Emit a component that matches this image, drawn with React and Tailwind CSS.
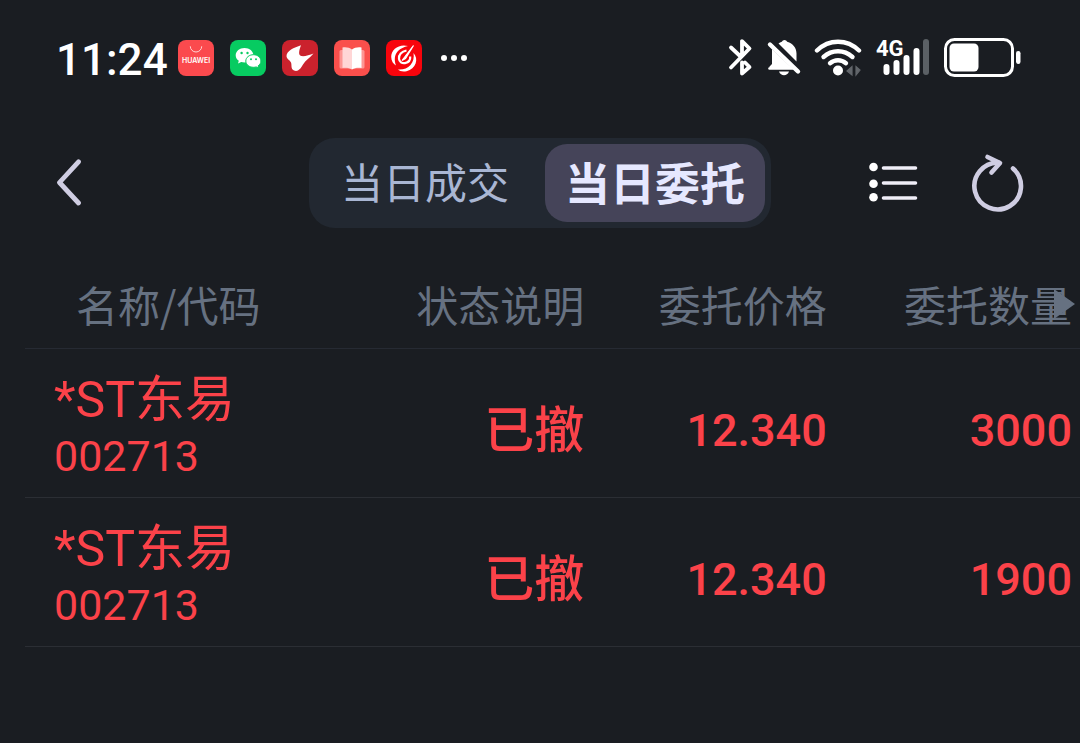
import React, { useState } from 'react';

const orders = [
  { id: 1, name: '*ST东易', code: '002713', status: '已撤', price: '12.340', amount: '3000' },
  { id: 2, name: '*ST东易', code: '002713', status: '已撤', price: '12.340', amount: '1900' },
];

const tabs = [
  { key: 'deals', label: '当日成交' },
  { key: 'orders', label: '当日委托' },
];

function HuaweiIcon() {
  return (
    <svg className="h-9 w-9" viewBox="0 0 36 36">
      <rect width="36" height="36" rx="8" fill="#fb4a4e" />
      <path d="M12.3 6.3a5.7 5.7 0 0 0 11.4 0" fill="none" stroke="#ffd5d5" strokeWidth="1" />
      <text
        x="18"
        y="23"
        textAnchor="middle"
        fill="#fff"
        fontSize="7"
        fontWeight="600"
        fontFamily="Inter, sans-serif"
      >
        HUAWEI
      </text>
    </svg>
  );
}

function WechatIcon() {
  return (
    <svg className="h-9 w-9" viewBox="0 0 36 36">
      <rect width="36" height="36" rx="8" fill="#07cb61" />
      <path d="M14.5 8C9.5 8 5.7 11.2 5.7 15.2c0 2.3 1.2 4.2 3.1 5.5L8 23.5l3.2-1.6c1.1.3 2.2.5 3.3.5 5 0 8.9-3.2 8.9-7.2S19.5 8 14.5 8z" fill="#fff" />
      <path d="M23.5 14.7c-4.3 0-7.7 2.8-7.7 6.3s3.4 6.3 7.7 6.3c1 0 1.9-.1 2.7-.4l2.6 1.4-.7-2.4c1.8-1.2 2.8-2.9 2.8-4.9 0-3.5-3.3-6.3-7.4-6.3z" fill="#fff" stroke="#07cb61" strokeWidth="1" />
      <circle cx="11.6" cy="13" r="1.2" fill="#07cb61" />
      <circle cx="17.5" cy="13" r="1.2" fill="#07cb61" />
      <circle cx="21" cy="19.2" r="1" fill="#07cb61" />
      <circle cx="26" cy="19.2" r="1" fill="#07cb61" />
    </svg>
  );
}

function BullIcon() {
  return (
    <svg className="h-9 w-9" viewBox="0 0 36 36">
      <rect width="36" height="36" rx="8" fill="#cb222d" />
      <path d="M19 5.3C12 7.5 4.5 11 4.5 16c0 3 3.5 4 4.5 6.5 1 2.5-.5 6.5 3 8 4 1.5 6.5-1.500 9-6 2.500-4.500 7-6.500 10.500-11-4 1.500-9 3.300-12.200 2.600-3.300-.7-2.300-5.600-.3-10.800z" fill="#fff" />
    </svg>
  );
}

function BookIcon() {
  return (
    <svg className="h-9 w-9" viewBox="0 0 36 36">
      <rect width="36" height="36" rx="8" fill="#fa4f4c" />
      <rect x="5.5" y="10" width="25" height="18.5" rx="1.5" fill="#fd9694" />
      <path d="M8.5 7.5c3.5-.5 7 0 9.5 2v20c-2.5-1.6-6-2-9.5-1.5z" fill="#ffd6d6" />
      <path d="M27.5 7.5c-3.5-.5-7 0-9.5 2v20c2.5-1.6 6-2 9.5-1.5z" fill="#fff" />
    </svg>
  );
}

function SwirlIcon() {
  return (
    <svg className="h-9 w-9" viewBox="0 0 36 36">
      <rect width="36" height="36" rx="8" fill="#f8040c" />
      <path d="M22 6C13.500 3.500 5 9 5.200 17c.1 4 2 7 4.800 8.500C8 20 8.500 14.500 12 11c2.500-2.500 6-4 10-5z" fill="#fff" />
      <path d="M27.500 13C33 19 30 29 20.500 31.200c-4 .9-7-.2-8.500-1.700 5.500.3 9.500-1.200 12.500-4.500 3-3.300 3.700-7.500 3-12z" fill="#fff" />
      <path d="M20.500 10.500c-5 .8-8 4.500-7.500 8.300.4 3 3 4.900 6 4.300 3.500-.7 5.500-3.300 5.200-6.600" fill="none" stroke="#fff" strokeWidth="2.200" />
      <path d="M27.500 5.500 16 20.500l3.500-2z" fill="#fff" stroke="#fff" strokeWidth="1.200" />
    </svg>
  );
}

function BluetoothIcon() {
  return (
    <svg className="h-10 w-7" viewBox="0 0 28 40" fill="none" stroke="#fff" strokeWidth="3.8" strokeLinecap="round" strokeLinejoin="round">
      <path d="M5 9.5 13.5 17.5M5 29.5 23.5 10.5 16 3.2v14M16 24.5v11l7.5-6.5-4.5-4.5" />
    </svg>
  );
}

function BellOffIcon() {
  return (
    <svg className="h-10 w-9" viewBox="0 0 36 40">
      <path d="M6 11 27 31H3.5v-2.600l2.500-2.400z" fill="#fff" />
      <path d="M12.5 5.5c1-.9 2-1.400 3.300-1.700a3 3 0 0 1 5.400 0C27 5.500 30.500 10 30.500 15.500v8z" fill="#fff" />
      <path d="M4 6.5 32 33.5" stroke="#fff" strokeWidth="4.4" strokeLinecap="round" />
      <path d="M3.5 30.5h23" stroke="#fff" strokeWidth="2.6" strokeLinecap="round" />
      <path d="M13 33.5h10c-1 2.600-2.800 3.800-5 3.800s-4-1.200-5-3.800z" fill="#fff" />
    </svg>
  );
}

function WifiIcon() {
  return (
    <svg className="h-10 w-12" viewBox="0 0 48 40" fill="none" stroke="#fff" strokeWidth="4.4" strokeLinecap="round">
      <path d="M3 12.5C15 .8 33 .8 45 12.5" />
      <path d="M9.5 19c8.5-7.600 20.500-7.600 29 0" />
      <path d="M16 25.2c4.800-4 11.200-4 16 0" />
      <circle cx="24" cy="32.5" r="5" fill="#fff" stroke="none" />
      <path d="M38 28.5v8.500L33 33zM42 37v-8.500L46 32z" fill="#62666b" stroke="#62666b" strokeWidth="1.2" />
    </svg>
  );
}

function SignalIcon() {
  return (
    <svg className="h-12 w-14" viewBox="0 -4 56 48">
      <text x="0" y="18" fill="#fff" fontSize="22" fontWeight="700" fontFamily="Roboto, sans-serif">
        4G
      </text>
      <g stroke="#fff" strokeWidth="6" strokeLinecap="round">
        <path d="M10.5 29v5M20.5 25v9M30.5 20v14M40.5 13v21" />
        <path d="M50 4v30" stroke="#5b6065" />
      </g>
    </svg>
  );
}

function BatteryIcon() {
  return (
    <svg className="h-10 w-20" viewBox="0 0 80 40">
      <rect x="1.5" y="1.5" width="67" height="36" rx="9" fill="none" stroke="#fff" strokeWidth="3" />
      <rect x="5.5" y="5.5" width="29" height="28" rx="4.5" fill="#fff" />
      <rect x="72" y="13" width="4.5" height="13" rx="2.2" fill="#fff" />
    </svg>
  );
}

function StatusBar() {
  return (
    <div className="flex h-[116px] items-center justify-between px-14">
      <div className="flex items-center">
        <span className="w-[122px] pt-1 font-['Roboto',sans-serif] text-[44px] leading-none font-medium text-white">
          11:24
        </span>
        <div className="flex items-center gap-4">
          <HuaweiIcon />
          <WechatIcon />
          <BullIcon />
          <BookIcon />
          <SwirlIcon />
          <svg className="h-2 w-8" viewBox="0 0 32 8" fill="#fff">
            <circle cx="6" cy="4" r="3" />
            <circle cx="16" cy="4" r="3" />
            <circle cx="26" cy="4" r="3" />
          </svg>
        </div>
      </div>
      <div className="flex items-center gap-3">
        <BluetoothIcon />
        <BellOffIcon />
        <WifiIcon />
        <div className="flex items-center gap-3 pl-0.5">
          <SignalIcon />
          <BatteryIcon />
        </div>
      </div>
    </div>
  );
}

function TopBar({ active, onChange }) {
  return (
    <header className="flex items-center px-14 pt-[22px]">
      <div className="flex-1">
        <button type="button" aria-label="返回" className="block">
          <svg className="h-12 w-7" viewBox="0 0 28 48" fill="none" stroke="#cfcde2" strokeWidth="4.8" strokeLinecap="round" strokeLinejoin="round">
            <path d="M22.5 2.8 3.5 23.5l19 20.5" />
          </svg>
        </button>
      </div>

      <nav className="flex rounded-[26px] bg-[#222831] p-1.5">
        {tabs.map((tab) => (
          <button
            key={tab.key}
            type="button"
            onClick={() => onChange(tab.key)}
            className={
              tab.key === active
                ? 'h-[78px] rounded-[22px] bg-[#454459] px-5 pb-1 text-[45px] leading-none font-bold text-[#e6e8ff]'
                : 'h-[78px] rounded-[22px] pr-9 pb-1 pl-[26px] text-[42px] leading-none text-[#a9b6d3]'
            }
          >
            {tab.label}
          </button>
        ))}
      </nav>

      <div className="flex flex-1 items-center justify-end gap-[50px]">
        <button type="button" aria-label="列表">
          <svg className="h-12 w-[52px]" viewBox="0 0 52 48">
            <g fill="#fff">
              <circle cx="5.5" cy="8" r="4.3" />
              <circle cx="5.5" cy="24.7" r="4.3" />
              <circle cx="5.5" cy="38.3" r="4.3" />
            </g>
            <path d="M15.5 9h32M15.5 24h32M15.5 39h32" stroke="#f0eef8" strokeWidth="3.6" strokeLinecap="round" />
          </svg>
        </button>
        <button type="button" aria-label="刷新">
          <svg className="h-[60px] w-[54px]" viewBox="0 0 54 60" fill="none" stroke="#cfcde2" strokeWidth="4.6" strokeLinecap="round" strokeLinejoin="round">
            <path d="M43 15.5A23.3 23.3 0 1 1 29 9.8" />
            <path d="M17.5 4 30 10 21.5 19.5" />
          </svg>
        </button>
      </div>
    </header>
  );
}

function OrderTable() {
  return (
    <div className="mt-[35px] pl-[25px]">
      <table className="w-full table-fixed border-collapse">
        <thead>
          <tr className="h-[85px] border-b border-[#262a33] text-[42px] leading-none text-[#667181]">
            <th className="w-[30%] pb-0.5 pl-[51px] text-left font-normal whitespace-nowrap">名称/代码</th>
            <th className="w-[23%] pb-0.5 text-right font-normal whitespace-nowrap">状态说明</th>
            <th className="w-[23%] pb-0.5 text-right font-normal whitespace-nowrap">委托价格</th>
            <th className="relative w-[24%] pr-2 pb-0.5 text-right font-normal whitespace-nowrap">
              委托数量
              <svg className="absolute top-1/2 right-1 h-8 w-6 -translate-y-1/2" viewBox="0 0 24 32">
                <path d="M2 0 23 15 2 30z" fill="#667181" />
              </svg>
            </th>
          </tr>
        </thead>
        <tbody>
          {orders.map((order) => (
            <tr
              key={order.id}
              className="h-[149px] border-b border-[#2b2e34] font-['Roboto','Noto_Sans_CJK_SC',sans-serif] text-[#fb4249]"
            >
              <td className="pt-1.5 pl-[29px] whitespace-nowrap">
                <div className="text-[50px] leading-[60px]">{order.name}</div>
                <div className="text-[43px] leading-[52px]">{order.code}</div>
              </td>
              <td className="pt-4 text-right text-[50px] leading-none font-medium">{order.status}</td>
              <td className="pt-4 text-right text-[45px] leading-none font-medium">{order.price}</td>
              <td className="pt-4 pr-2 text-right text-[45px] leading-none font-medium">{order.amount}</td>
            </tr>
          ))}
        </tbody>
      </table>
    </div>
  );
}

export default function App() {
  const [active, setActive] = useState('orders');

  return (
    <div className="min-h-screen overflow-hidden bg-[#1a1d22] font-['Noto_Sans_CJK_SC',sans-serif]">
      <StatusBar />
      <TopBar active={active} onChange={setActive} />
      <OrderTable />
    </div>
  );
}
